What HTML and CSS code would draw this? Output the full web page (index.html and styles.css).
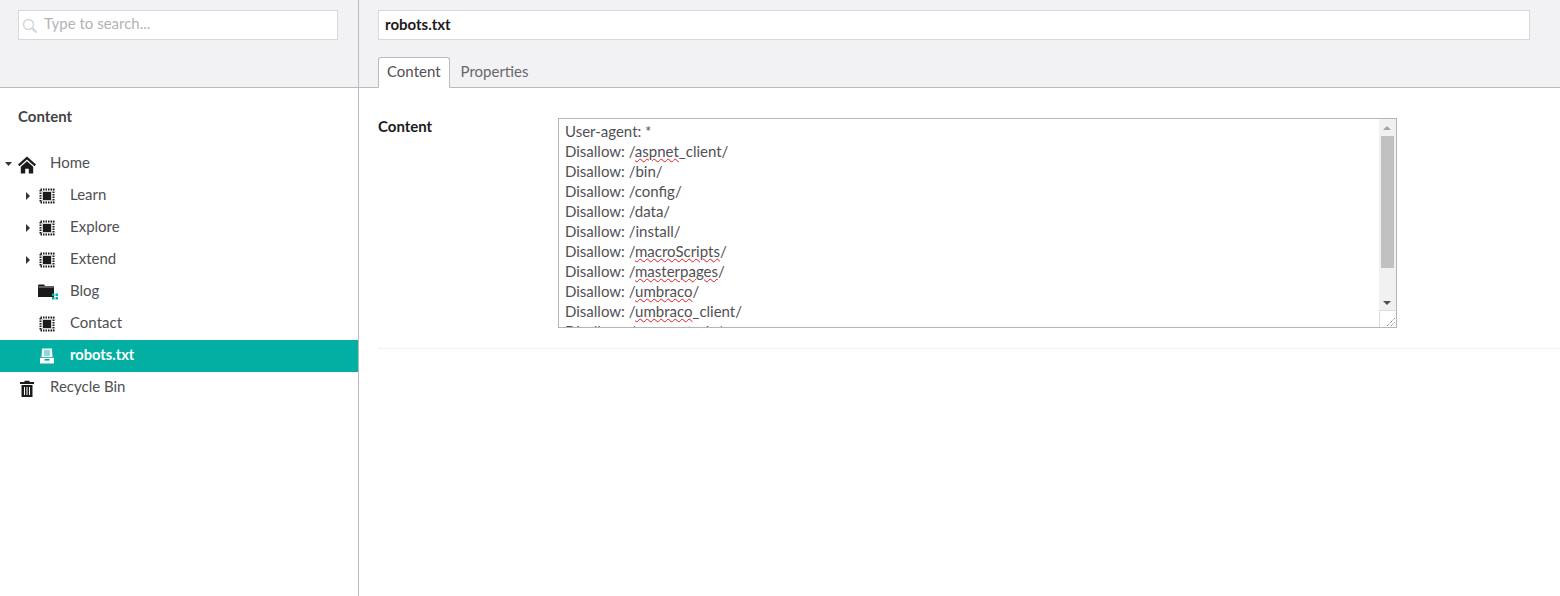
FILE: index.html
```html
<!DOCTYPE html>
<html lang="en">
<head>
<meta charset="utf-8">
<title>robots.txt</title>
<link rel="stylesheet" href="styles.css">
</head>
<body>
<div class="app">
  <aside class="sidebar">
    <div class="side-head">
      <div class="search">
        <svg class="search-icon" viewBox="0 0 16 16" width="16" height="16"><circle cx="6.500" cy="6.500" r="5" fill="none" stroke="#d5d5d8" stroke-width="1.400"/><path d="M10.500 10.500l4 4" stroke="#d5d5d8" stroke-width="2.400"/></svg>
        <span class="search-text">Type to search...</span>
      </div>
    </div>
    <div class="section-title">Content</div>
    <ul class="tree">
      <li class="row">
        <svg class="caret" viewBox="0 0 8 8" width="8" height="8"><path d="M0 2h7L3.500 6z" fill="#333"/></svg>
        <svg class="icon home" viewBox="0 0 18 18" width="18" height="18"><path d="M9 .5L0 8.600l1.500 1.700L9 3.600l7.500 6.700L18 8.600z" fill="#1b1b1b"/><path d="M9 5.200L2.800 10.800V17.500h4.400v-4.700h3.600v4.700h4.400v-6.700z" fill="#1b1b1b"/></svg>
        <span>Home</span>
      </li>
      <li class="row child">
        <svg class="caret" viewBox="0 0 8 8" width="8" height="8"><path d="M2 0v8l4-4z" fill="#333"/></svg>
        <svg class="icon" viewBox="0 0 16 16" width="16" height="16"><use href="#stamp"/></svg>
        <span>Learn</span>
      </li>
      <li class="row child">
        <svg class="caret" viewBox="0 0 8 8" width="8" height="8"><path d="M2 0v8l4-4z" fill="#333"/></svg>
        <svg class="icon" viewBox="0 0 16 16" width="16" height="16"><use href="#stamp"/></svg>
        <span>Explore</span>
      </li>
      <li class="row child">
        <svg class="caret" viewBox="0 0 8 8" width="8" height="8"><path d="M2 0v8l4-4z" fill="#333"/></svg>
        <svg class="icon" viewBox="0 0 16 16" width="16" height="16"><use href="#stamp"/></svg>
        <span>Extend</span>
      </li>
      <li class="row child leaf">
        <svg class="icon folder" viewBox="0 0 20 16" width="20" height="16"><path d="M0 2C0 1 .6.500 1.500.500h4.500l1 1.500h8c.6 0 1 .4 1 1V13H0z" fill="#1b1b1b"/><path d="M.5 3h15" stroke="#fff" stroke-width=".6"/><path d="M14 9.500h2.500V12H14zM17.500 9.500H20V12h-2.500zM14 13h2.500v2.500H14zM17.500 13H20v2.500h-2.500z" fill="#02afa2"/></svg>
        <span>Blog</span>
      </li>
      <li class="row child leaf">
        <svg class="icon" viewBox="0 0 16 16" width="16" height="16"><use href="#stamp"/></svg>
        <span>Contact</span>
      </li>
      <li class="row child leaf active">
        <svg class="icon" viewBox="0 0 16 16" width="16" height="16"><path d="M3 0.500h10l.5 8.500H2.500z" fill="#fff"/><path d="M5 3h6M5 5h6M5 7h6" stroke="#02afa2" stroke-width=".9"/><path d="M1 9.800h14V15.500H1z" fill="#fff"/><path d="M5.500 11h5v1.600h-5z" fill="#02afa2"/></svg>
        <span>robots.txt</span>
      </li>
      <li class="row">
        <svg class="icon bin" viewBox="0 0 16 18" width="16" height="18"><path d="M5.500 2V.8h5V2h4.500v2H1V2z" fill="#1b1b1b"/><path d="M2.500 5h11v12h-11z" fill="#1b1b1b"/><path d="M5.500 7v8M8 7v8M10.500 7v8" stroke="#fff" stroke-width="1"/></svg>
        <span>Recycle Bin</span>
      </li>
    </ul>
  </aside>
  <main class="main">
    <header class="main-head">
      <div class="name-input">robots.txt</div>
      <nav class="tabs">
        <span class="tab current">Content</span>
        <span class="tab">Properties</span>
      </nav>
    </header>
    <section class="panel">
      <div class="prop">
        <label class="prop-label">Content</label>
        <div class="textarea">
          <div class="lines">
            <div>User-agent: *</div>
            <div>Disallow: /<span class="spell">aspnet</span>_client/</div>
            <div>Disallow: /bin/</div>
            <div>Disallow: /config/</div>
            <div>Disallow: /data/</div>
            <div>Disallow: /install/</div>
            <div>Disallow: /<span class="spell">macroScripts</span>/</div>
            <div>Disallow: /<span class="spell">masterpages</span>/</div>
            <div>Disallow: /<span class="spell">umbraco</span>/</div>
            <div>Disallow: /<span class="spell">umbraco</span>_client/</div>
            <div>Disallow: /usercontrols/</div>
          </div>
          <div class="scrollbar">
            <svg class="arrow up" viewBox="0 0 8 4" width="8" height="4"><path d="M4 0l4 4H0z" fill="#a3a3a3"/></svg>
            <div class="thumb"></div>
            <svg class="arrow down" viewBox="0 0 8 4" width="8" height="4"><path d="M0 0h8L4 4z" fill="#505050"/></svg>
          </div>
          <div class="resizer">
            <svg viewBox="0 0 8 8" width="8" height="8"><path d="M0 8l8-8M4 8l4-4" stroke="#555" stroke-width="1" stroke-dasharray="1 1" fill="none"/></svg>
          </div>
        </div>
      </div>
    </section>
  </main>
</div>
<svg class="defs" width="0" height="0" aria-hidden="true">
  <defs>
    <g id="stamp">
      <path d="M1.500 1.500h13v13h-13z" fill="none" stroke="#1b1b1b" stroke-width="2" stroke-dasharray="1.500 1"/>
      <path d="M3 3h10v10H3z" fill="#d0d0d0"/>
      <path d="M4 4h8v8H4z" fill="#1b1b1b"/>
    </g>
  </defs>
</svg>
</body>
</html>
```
FILE: styles.css
```css
* { box-sizing: border-box; }
html, body { height: 100%; margin: 0; }
body {
  font-family: Lato, "Open Sans", sans-serif;
  font-size: 15px;
  color: #515054;
  background: #fff;
  overflow: hidden;
}
.defs { position: absolute; }
.app { display: flex; height: 596px; }
.sidebar { width: 359px; flex: none; border-right: 1px solid #bbbabf; }
.side-head {
  height: 88px;
  padding: 10px 20px 0 18px;
  background: #f2f2f5;
  border-bottom: 1px solid #bbbabf;
}
.search {
  display: flex;
  align-items: center;
  height: 30px;
  background: #fff;
  border: 1px solid #d8d7d9;
  padding-left: 3px;
}
.search-icon { flex: none; margin-top: 1px; }
.search-text { margin-left: 6px; color: #b3b3b6; line-height: 24px; margin-top: -4px; }
.section-title {
  height: 60px;
  padding: 19px 0 0 18px;
  font-weight: 700;
  font-size: 15px;
  line-height: 18px;
  color: #444;
}
.tree { list-style: none; margin: 0; padding: 0; }
.row {
  display: flex;
  align-items: center;
  height: 32px;
  padding-left: 5px;
}
.row .icon { flex: none; margin-left: 5px; }
.row .home { margin-left: 5px; margin-top: 1px; }
.row span { margin-left: 14px; margin-top: -4px; color: #515054; }
.row > .caret { flex: none; margin-top: 0; }
.row .bin { margin-left: 14px; margin-top: 2px; }
.row .bin + span { margin-left: 15px; }
.child { padding-left: 24px; }
.child .icon { margin-left: 7px; margin-right: 0; }
.child span { margin-left: 15px; }
.leaf { padding-left: 31px; }
.leaf .icon { margin-left: 8px; }
.leaf .folder { margin-left: 7px; margin-right: -3px; }
.active { background: #02afa2; }
.active span { color: #fff; font-weight: 700; font-size: 14.7px; }
.main { flex: 1; min-width: 0; }
.main-head {
  height: 88px;
  background: #f2f2f5;
  border-bottom: 1px solid #bbbabf;
  padding: 10px 30px 0 19px;
}
.name-input {
  height: 30px;
  padding: 0 6px;
  background: #fff;
  border: 1px solid #d8d7d9;
  color: #1b1b1b;
  font-weight: 700;
  font-size: 15px;
  line-height: 26px;
}
.tabs { display: flex; margin-top: 17px; }
.tab {
  height: 31px;
  padding: 0 10px;
  border: 1px solid transparent;
  line-height: 26px;
  color: #68676b;
}
.tab.current {
  padding: 0 8px;
  background: #fff;
  border-color: #bbbabf;
  border-bottom-color: #fff;
  border-radius: 3px 3px 0 0;
  color: #515054;
}
.panel { padding: 30px 0 0 19px; }
.prop {
  display: flex;
  height: 231px;
  border-bottom: 1px solid #f0f0f2;
}
.prop-label {
  width: 180px;
  flex: none;
  font-weight: 700;
  font-size: 15px;
  line-height: 16px;
  color: #1b1b1b;
}
.textarea {
  position: relative;
  width: 839px;
  height: 210px;
  overflow: hidden;
  border: 1px solid #b5b5b5;
  padding: 2px 6px;
  line-height: 20px;
  font-size: 15px;
  color: #515054;
}
.spell {
  text-decoration: underline wavy #e81818 1px;
  text-underline-offset: 1px;
}
.scrollbar {
  position: absolute;
  top: 0;
  right: 0;
  bottom: 17px;
  width: 17px;
  background: #f1f1f1;
}
.arrow { position: absolute; left: 4px; }
.arrow.up { top: 7px; }
.arrow.down { bottom: 5px; }
.thumb {
  position: absolute;
  top: 17px;
  left: 2px;
  width: 13px;
  height: 132px;
  background: #c1c1c1;
}
.resizer {
  position: absolute;
  right: 0;
  bottom: 0;
  width: 17px;
  height: 17px;
  background: #fff;
  border-left: 1px solid #dcdcdc;
  border-top: 1px solid #dcdcdc;
}
.resizer svg { position: absolute; right: 1px; bottom: 1px; }
```
